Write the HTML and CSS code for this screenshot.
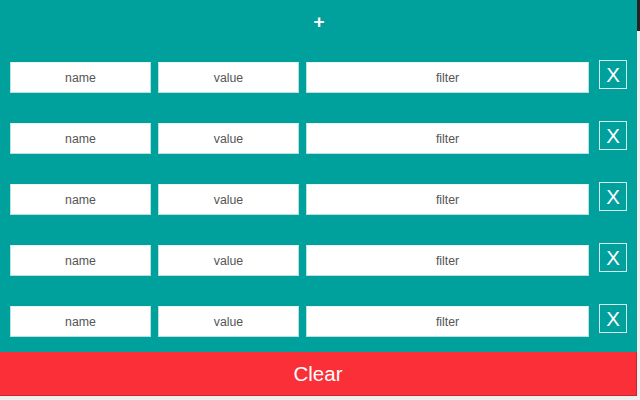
FILE: index.html
```html
<!DOCTYPE html>
<html>
<head>
<meta charset="utf-8">
<link rel="stylesheet" href="styles.css">
</head>
<body>
<div class="panel">
  <div class="rules">
    <div class="add">+</div>
    <div class="rows">
      <div class="row">
        <div class="field name">name</div>
        <div class="field value">value</div>
        <div class="field filter">filter</div>
        <div class="remove">X</div>
      </div>
      <div class="row">
        <div class="field name">name</div>
        <div class="field value">value</div>
        <div class="field filter">filter</div>
        <div class="remove">X</div>
      </div>
      <div class="row">
        <div class="field name">name</div>
        <div class="field value">value</div>
        <div class="field filter">filter</div>
        <div class="remove">X</div>
      </div>
      <div class="row">
        <div class="field name">name</div>
        <div class="field value">value</div>
        <div class="field filter">filter</div>
        <div class="remove">X</div>
      </div>
      <div class="row">
        <div class="field name">name</div>
        <div class="field value">value</div>
        <div class="field filter">filter</div>
        <div class="remove">X</div>
      </div>
    </div>
  </div>
  <div class="clear">Clear</div>
</div>
</body>
</html>
```
FILE: styles.css
```css
html, body {
  margin: 0;
  padding: 0;
  height: 100%;
}
body {
  width: 640px;
  height: 400px;
  overflow: hidden;
  background: linear-gradient(to bottom, #232323 0, #232323 31px, #eef0f0 31px, #eef0f0 100%);
  font-family: "Liberation Sans", Arial, sans-serif;
}
.panel {
  width: 637px;
  display: flex;
  flex-direction: column;
}
.rules {
  background: #00a09d;
  display: flex;
  flex-direction: column;
}
.add {
  height: 44px;
  line-height: 44px;
  text-align: center;
  color: #ffffff;
  font-size: 19px;
  font-weight: bold;
  padding-left: 1px;
}
.rows {
  display: flex;
  flex-direction: column;
  gap: 30px;
  padding: 18px 10px 15px 10px;
}
.row {
  display: flex;
  align-items: flex-start;
  height: 31px;
}
.field {
  box-sizing: border-box;
  height: 31px;
  background: #ffffff;
  border: 1px solid #b8e2e0;
  border-top-color: #e6f4f3;
  color: #555555;
  font-size: 12.3px;
  line-height: 31px;
  text-align: center;
}
.name {
  width: 141px;
  margin-right: 7px;
}
.value {
  width: 141px;
  margin-right: 7px;
}
.filter {
  width: 283px;
  margin-right: 10px;
}
.remove {
  box-sizing: border-box;
  width: 28px;
  height: 29px;
  margin-top: -2px;
  border: 1px solid #d8f0ef;
  color: #ffffff;
  font-size: 20.5px;
  line-height: 27px;
  text-align: center;
}
.clear {
  box-sizing: border-box;
  height: 44px;
  background: #fa2f37;
  border-right: 1px solid #c8262c;
  border-bottom: 1px solid #c8262c;
  color: #ffffff;
  font-size: 20.5px;
  line-height: 43px;
  text-align: center;
}
```
